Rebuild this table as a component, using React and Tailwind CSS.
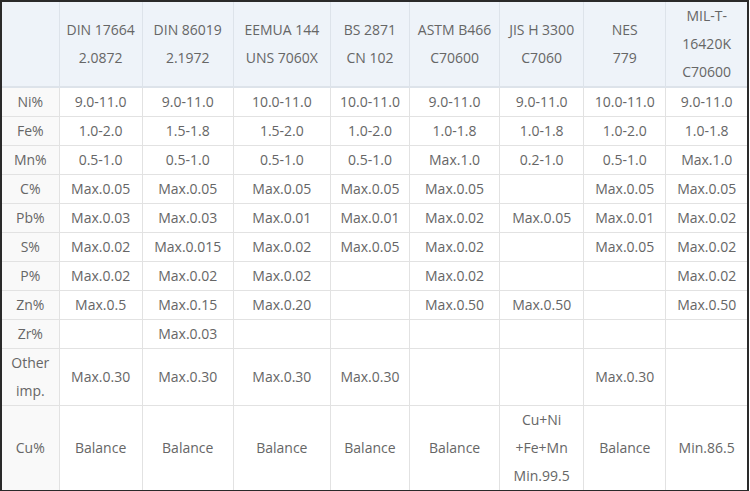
import React from 'react';

const heads = [
  ['DIN 17664', '2.0872'],
  ['DIN 86019', '2.1972'],
  ['EEMUA 144', 'UNS 7060X'],
  ['BS 2871', 'CN 102'],
  ['ASTM B466', 'C70600'],
  ['JIS H 3300', 'C7060'],
  ['NES', '779'],
  ['MIL-T-', '16420K', 'C70600'],
];

const widths = [57, 83, 91, 97, 79, 90, 84, 82, 81];

const rows = [
  ['Ni%', '9.0-11.0', '9.0-11.0', '10.0-11.0', '10.0-11.0', '9.0-11.0', '9.0-11.0', '10.0-11.0', '9.0-11.0'],
  ['Fe%', '1.0-2.0', '1.5-1.8', '1.5-2.0', '1.0-2.0', '1.0-1.8', '1.0-1.8', '1.0-2.0', '1.0-1.8'],
  ['Mn%', '0.5-1.0', '0.5-1.0', '0.5-1.0', '0.5-1.0', 'Max.1.0', '0.2-1.0', '0.5-1.0', 'Max.1.0'],
  ['C%', 'Max.0.05', 'Max.0.05', 'Max.0.05', 'Max.0.05', 'Max.0.05', '', 'Max.0.05', 'Max.0.05'],
  ['Pb%', 'Max.0.03', 'Max.0.03', 'Max.0.01', 'Max.0.01', 'Max.0.02', 'Max.0.05', 'Max.0.01', 'Max.0.02'],
  ['S%', 'Max.0.02', 'Max.0.015', 'Max.0.02', 'Max.0.05', 'Max.0.02', '', 'Max.0.05', 'Max.0.02'],
  ['P%', 'Max.0.02', 'Max.0.02', 'Max.0.02', '', 'Max.0.02', '', '', 'Max.0.02'],
  ['Zn%', 'Max.0.5', 'Max.0.15', 'Max.0.20', '', 'Max.0.50', 'Max.0.50', '', 'Max.0.50'],
  ['Zr%', '', 'Max.0.03', '', '', '', '', '', ''],
  [['Other', 'imp.'], 'Max.0.30', 'Max.0.30', 'Max.0.30', 'Max.0.30', '', '', 'Max.0.30', ''],
  ['Cu%', 'Balance', 'Balance', 'Balance', 'Balance', 'Balance', ['Cu+Ni', '+Fe+Mn', 'Min.99.5'], 'Balance', 'Min.86.5'],
];

function Lines({ v }) {
  if (Array.isArray(v)) return v.map((l, i) => <div key={i}>{l}</div>);
  return v;
}

export default function App() {
  return (
    <div className="w-[750px] h-[491px] bg-white overflow-hidden">
      <div className="w-[749px] border-2 border-[#2a2a2a] font-['Open_Sans',sans-serif] text-[14px] leading-[28px] text-[#666]">
        <table className="table-fixed border-collapse w-full text-center">
          <colgroup>
            {widths.map((w, i) => <col key={i} style={{ width: w }} />)}
          </colgroup>
          <thead>
            <tr className="bg-[#eef3f9] h-[85px]">
              <th className="border-r border-b-2 border-[#dde3ea] font-normal"></th>
              {heads.map((h, i) => (
                <th key={i} className="border-r border-b-2 border-[#dde3ea] last:border-r-0 font-normal align-middle">
                  <Lines v={h} />
                </th>
              ))}
            </tr>
          </thead>
          <tbody>
            {rows.map((r, ri) => (
              <tr key={ri}>
                {r.map((c, ci) => (
                  <td
                    key={ci}
                    className={`border-r border-b border-[#e2e2e2] align-middle p-0 ${ci === 0 ? 'bg-[#f9f9f9]' : ''} ${ci === 8 ? 'border-r-0' : ''} ${ri === rows.length - 1 ? 'border-b-0' : ''}`}
                  >
                    <Lines v={c} />
                  </td>
                ))}
              </tr>
            ))}
          </tbody>
        </table>
      </div>
    </div>
  );
}
